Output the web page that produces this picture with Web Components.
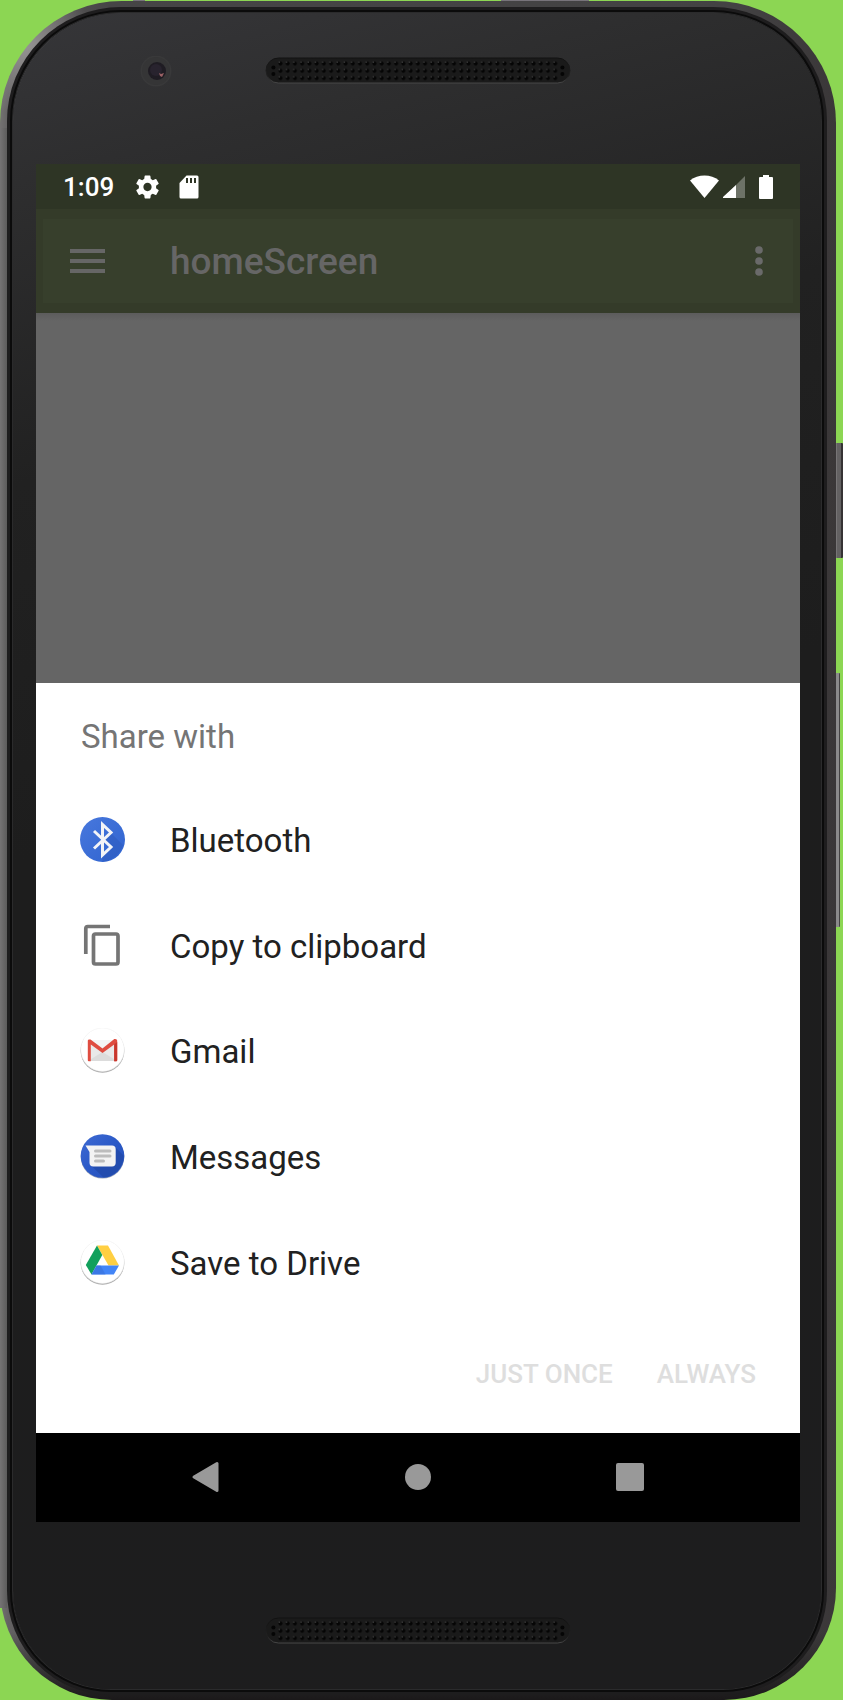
<!DOCTYPE html>
<html lang="en">
<head>
<meta charset="utf-8">
<meta name="viewport" content="width=device-width, initial-scale=1">
<title>homeScreen</title>
<style>
  body { margin: 0; background: #8cd653; font-family: Roboto, "Liberation Sans", sans-serif; }
</style>
</head>
<body>
<phone-frame>
  <status-bar time="1:09"></status-bar>
  <app-bar>homeScreen</app-bar>
  <page-scrim></page-scrim>
  <share-sheet>
    <span slot="title">Share with</span>
    <share-target icon="bluetooth">Bluetooth</share-target>
    <share-target icon="copy">Copy to clipboard</share-target>
    <share-target icon="gmail">Gmail</share-target>
    <share-target icon="messages">Messages</share-target>
    <share-target icon="drive">Save to Drive</share-target>
    <sheet-action slot="actions">JUST ONCE</sheet-action>
    <sheet-action slot="actions">ALWAYS</sheet-action>
  </share-sheet>
  <nav-bar></nav-bar>
</phone-frame>

<script>
const define = (name, html, setup) => customElements.define(name, class extends HTMLElement {
  connectedCallback() {
    if (this.shadowRoot) return;
    const root = this.attachShadow({ mode: 'open' });
    const tpl = document.createElement('template');
    tpl.innerHTML = '<style>*{box-sizing:border-box}button{border:0;padding:0;margin:0;background:none;font:inherit;color:inherit}svg{display:block}</style>' + html;
    root.append(tpl.content.cloneNode(true));
    if (setup) setup(this, root);
  }
});

define('phone-frame', `
<style>
  :host { display: block; padding: 1px 7px 0 0; }
  .rim { position: relative; padding: 12px 15px 11px 13px; border-radius: 122px 122px 112px 112px;
    background: radial-gradient(circle at 24px 44px, #969494 0, transparent 70px), linear-gradient(180deg, transparent 96%, #1b191a 100%), linear-gradient(90deg, #747272 0, #646263 8px, #464546 110px, #434243 88%, #3a3738 100%); }
  .face { border-radius: 108px 108px 98px 98px; padding: 0 21px 0 23px;
    background: linear-gradient(165deg, #363639 0, #2e2e2f 9%, #212121 25%, #1d1d1d 45%, #1d1d1e 100%);
    box-shadow: 0 0 0 1px #2b2b2c, 0 0 0 3px #0b0b0b, 0 0 0 6px #1e1d1e; }
  .head { height: 151px; display: grid; grid-template-columns: 1fr 306px 1fr; align-items: start; padding-top: 43px; }
  .camera { justify-self: center; margin-left: 10px; }
  .chin { height: 167px; display: flex; justify-content: center; align-items: flex-start; padding-top: 94px; }
  .key { position: absolute; left: 100%; border-radius: 0 1px 1px 0; }
  .power { top: 442px; width: 7px; height: 115px; background: linear-gradient(90deg, #777576 0 1px, #636162 1px 5px, #353334 5px); }
  .volume { top: 672px; width: 4px; height: 254px; background: linear-gradient(90deg, #8b8a8b 0 3px, #454344 3px); }
  .band { position: absolute; top: -1px; height: 1px; background: #77737a; }
  .b1 { left: 133px; width: 12px; } .b2 { left: 501px; width: 88px; }
  .side { position: absolute; left: 0; top: 127px; bottom: 92px; width: 7px; background: linear-gradient(90deg, #757374, #5d5c5c); }
</style>
<div class="rim">
  <div class="side"></div>
  <div class="band b1"></div><div class="band b2"></div>
  <div class="key power"></div><div class="key volume"></div>
  <div class="face">
    <div class="head">
      <svg class="camera" width="34" height="34" viewBox="0 0 34 34">
        <circle cx="17" cy="15" r="15.500" fill="#39393a"/><circle cx="17" cy="15" r="14" fill="#353536"/>
        <circle cx="18" cy="15" r="9" fill="#1f1c23"/><circle cx="17" cy="14" r="6" fill="#28232e"/>
        <path d="M20 17l2 1 3-1-2 4-2-1z" fill="#9a6165"/>
      </svg>
      <speaker-grille></speaker-grille>
    </div>
    <slot></slot>
    <div class="chin"><speaker-grille class="low"></speaker-grille></div>
  </div>
</div>`);

define('speaker-grille', `
<style>:host { display: block; width: 306px; }</style>
<svg width="306" height="28" viewBox="0 0 306 28">
  <defs>
    <linearGradient id="e" x2="0" y2="1"><stop stop-color="#111"/><stop offset=".75" stop-color="#222"/><stop offset="1" stop-color="#484848"/></linearGradient>
    <pattern id="p" x="11.4" y="3.4" width="7.23" height="7.3" patternUnits="userSpaceOnUse">
      <circle cx="4.1" cy="4.1" r="2" fill="#050505"/><circle cx="3" cy="2.8" r=".8" fill="#3a3a3a"/>
    </pattern>
  </defs>
  <rect x="1" y="2" width="304" height="25" rx="12.5" fill="#1a1a1a" stroke="url(#e)"/>
  <rect x="11.4" y="3.4" width="282" height="21.9" fill="url(#p)"/>
  <g fill="#050505"><circle cx="8.4" cy="11.4" r="2"/><circle cx="8.4" cy="18" r="2"/><circle cx="297.4" cy="11.4" r="2"/><circle cx="297.4" cy="18" r="2"/></g>
</svg>`);

define('status-bar', `
<style>
  :host { display: flex; align-items: center; height: 45px; padding: 0 27px 0 27px; background: #2e3525; color: #fff; font-size: 26px; line-height: 32px; }
  .time { font-weight: 500; margin-right: 22px; }
  .left, .right { display: flex; align-items: center; }
  .left { gap: 20px; } .right { margin-left: auto; gap: 4px; }
  .battery { margin-left: 10px; }
</style>
<span class="time"></span>
<div class="left">
  <svg width="23" height="24" viewBox="2 2 20 20" fill="#fff"><path d="M19.43 12.98c.04-.32.07-.64.07-.98s-.03-.66-.07-.98l2.11-1.65c.19-.15.24-.42.12-.64l-2-3.46c-.12-.22-.39-.3-.61-.22l-2.49 1c-.52-.4-1.08-.73-1.69-.98l-.38-2.65C14.46 2.18 14.25 2 14 2h-4c-.25 0-.46.18-.49.42l-.38 2.65c-.61.25-1.17.59-1.69.98l-2.49-1c-.23-.09-.49 0-.61.22l-2 3.46c-.13.22-.07.49.12.64l2.11 1.65c-.04.32-.07.65-.07.98s.03.66.07.98l-2.11 1.65c-.19.15-.24.42-.12.64l2 3.46c.12.22.39.3.61.22l2.49-1c.52.4 1.08.73 1.69.98l.38 2.65c.03.24.24.42.49.42h4c.25 0 .46-.18.49-.42l.38-2.65c.61-.25 1.17-.59 1.69-.98l2.49 1c.23.09.49 0 .61-.22l2-3.46c.12-.22.07-.49-.12-.64l-2.11-1.65zM12 15.6c-1.98 0-3.6-1.62-3.6-3.6s1.62-3.6 3.6-3.6 3.6 1.62 3.6 3.6-1.62 3.6-3.6 3.6z"/></svg>
  <svg width="20" height="24" viewBox="0 0 20 24"><path d="M7.5.5H18a1.5 1.5 0 0 1 1.500 1.500V22a1.500 1.500 0 0 1-1.500 1.500H2A1.500 1.500 0 0 1 .5 22V8z" fill="#fff"/><path d="M8 3v5M12 3v5M16 3v5" stroke="#2e3525" stroke-width="2"/></svg>
</div>
<div class="right">
  <svg width="29" height="24" viewBox="0 0 29 24"><path d="M0 5.500C8-1.300 21-1.300 29 5.500L14.500 23z" fill="#fff"/></svg>
  <svg width="22" height="24" viewBox="0 0 22 24"><path d="M22 1v22H0z" fill="#6d7267"/><path d="M13 10v13H0v-1z" fill="#fff"/></svg>
  <svg class="battery" width="14" height="24" viewBox="0 0 14 24"><path d="M4 0h6v2h3a1 1 0 0 1 1 1v20a1 1 0 0 1-1 1H1a1 1 0 0 1-1-1V3a1 1 0 0 1 1-1h3z" fill="#fff"/></svg>
</div>`, (el, root) => { root.querySelector('.time').textContent = el.getAttribute('time'); });

define('app-bar', `
<style>
  :host { display: block; }
  header { display: flex; align-items: center; height: 104px; padding: 0 23px 0 27px; border: 7px solid #343b29; border-width: 10px 7px; background: #373f2c; color: #666; }
  h1 { margin: 0 auto 0 65px; padding-top: 2px; font-size: 37px; line-height: 44px; font-weight: 500; }
</style>
<header>
  <button aria-label="Open menu"><svg width="35" height="24" viewBox="0 0 35 24" fill="#666"><path d="M0 0h35v4H0zM0 10h35v4H0zM0 20h35v4H0z"/></svg></button>
  <h1><slot></slot></h1>
  <button aria-label="More options"><svg width="22" height="30" viewBox="0 0 22 30" fill="#6a6a6a"><circle cx="11" cy="4" r="3.800"/><circle cx="11" cy="15" r="3.800"/><circle cx="11" cy="26" r="3.800"/></svg></button>
</header>`);

define('page-scrim', `<style>:host { display: block; height: 370px; background: linear-gradient(#5c5c5c, #656565 8px); }</style>`);

define('share-sheet', `
<style>
  :host { display: block; background: #fff; }
  section { padding: 0 44px; }
  h2 { margin: 0; height: 104px; display: flex; align-items: center; color: #757575; font-size: 33px; line-height: 40px; font-weight: 400; padding: 4px 0 0 1px; }
  .list { display: grid; grid-auto-rows: 1fr; min-height: 528px; }
  .actions { height: 118px; display: flex; justify-content: flex-end; align-items: center; gap: 44px; }
</style>
<section role="dialog" aria-labelledby="t">
  <h2 id="t"><slot name="title"></slot></h2>
  <div class="list" role="list"><slot></slot></div>
  <div class="actions"><slot name="actions"></slot></div>
</section>`);

define('sheet-action', `
<style>:host { display: block; } button { color: #dedede; font-size: 26px; line-height: 32px; font-weight: 500; }</style>
<button disabled><slot></slot></button>`);

const icons = {
  bluetooth: `<defs><linearGradient id="g" x2="1" y2="1"><stop stop-color="#4878dd"/><stop offset="1" stop-color="#2f63cf"/></linearGradient></defs>
    <circle cx="22.500" cy="22.500" r="22.500" fill="url(#g)"/><path d="M31 16l12 12c-3 9-10 15-20 17l-1-5 9-9-8-8z" fill="#2c59bb" opacity=".45"/>
    <path d="M14 14l17 16-8.500 8V7.500l8.500 8-17 16" fill="none" stroke="#f3f4f7" stroke-width="3"/>`,
  copy: `<path d="M5.800 31V5.500a2 2 0 0 1 2-2H30" fill="none" stroke="#757575" stroke-width="3.700"/><rect x="13.500" y="11" width="24.500" height="30" rx="2" fill="none" stroke="#757575" stroke-width="3.700"/>`,
  gmail: `<circle cx="22.500" cy="22.800" r="21.900" fill="#aaa"/><circle cx="22.500" cy="21.700" r="21.700" fill="#fff" stroke="#eee" stroke-width=".5"/>
    <path d="M8.500 12h28v21h-28z" fill="#e9e9e9"/><path d="M22.500 24L37 33H8z" fill="#dcdcdc"/><path d="M11 12h23L22.500 20z" fill="#f4f4f4"/>
    <path d="M7.800 12.500v19.800q0 1 1 1h2V16.500l11.700 8.500 11.700-8.500v16.800h2q1 0 1-1V12.500q0-1.500-2-1.500h-.9L22.500 20.500 10.500 11.500q-2.700-.5-2.700 1z" fill="#df4c40"/><path d="M34.200 16.500v16.800h2q1 0 1-1V14z" fill="#c8372d"/>`,
  messages: `<defs><linearGradient id="g" x2="1" y2="1"><stop stop-color="#3f6bd3"/><stop offset=".5" stop-color="#2b59c7"/><stop offset="1" stop-color="#2450b8"/></linearGradient></defs>
    <circle cx="22.500" cy="22.800" r="21.800" fill="#9aa4b8"/><circle cx="22.500" cy="22" r="21.800" fill="url(#g)"/><path d="M34.500 12.500l9 9c0 12-9 21-20 22L10.500 31z" fill="#224aa8" opacity=".75"/>
    <path d="M5.500 11.500H32q3.700 0 3.700 3.700v13.600q0 3.700-3.700 3.700H13.200q-3.700 0-3.700-3.700V18z" fill="#f3f3f3"/><path d="M15.500 17H30M15.500 22H30M15.500 27h8" stroke="#bcbcbc" stroke-width="3" stroke-linecap="round"/>`,
  drive: `<circle cx="22.500" cy="22.800" r="21.900" fill="#aaa"/><circle cx="22.500" cy="21.700" r="21.700" fill="#fff" stroke="#eee" stroke-width=".5"/>
    <g transform="translate(0 -1)"><path d="M17 6.500h11L39 26.500H28.500z" fill="#ffcf42"/><path d="M17 6.500L22.300 16 11.500 35.500 5.800 26z" fill="#12a05c"/><path d="M16.500 26.500h22.500L33.800 35.500H11.500z" fill="#4285f7"/><path d="M16.500 26.500h4l5 9h-14z" fill="#376fd8" opacity=".6"/></g>`
};
define('share-target', `
<style>
  :host { display: block; }
  button { display: flex; align-items: center; gap: 45px; width: 100%; height: 100%; color: #212121; font-size: 33px; line-height: 40px; text-align: left; }
  .label { padding-top: 3px; }
</style>
<button><svg width="45" height="45" viewBox="0 0 45 45" aria-hidden="true"></svg><span class="label"><slot></slot></span></button>`,
(el, root) => { el.setAttribute('role', 'listitem'); root.querySelector('svg').innerHTML = icons[el.getAttribute('icon')]; });

define('nav-bar', `
<style>
  :host { display: block; background: #000; }
  nav { display: grid; grid-template-columns: repeat(3, 1fr); height: 89px; padding: 0 64px 1px; }
  button { display: grid; place-items: center; }
</style>
<nav>
  <button aria-label="Back"><svg width="30" height="32" viewBox="0 0 30 32"><path d="M3 16L26 2.500v27z" fill="#999" stroke="#999" stroke-width="3" stroke-linejoin="round"/></svg></button>
  <button aria-label="Home"><svg width="28" height="28" viewBox="0 0 28 28"><circle cx="14" cy="14" r="13" fill="#999"/></svg></button>
  <button aria-label="Recent apps"><svg width="30" height="30" viewBox="0 0 30 30"><rect x="1" y="1" width="28" height="28" rx="2" fill="#999"/></svg></button>
</nav>`);
</script>
</body>
</html>
